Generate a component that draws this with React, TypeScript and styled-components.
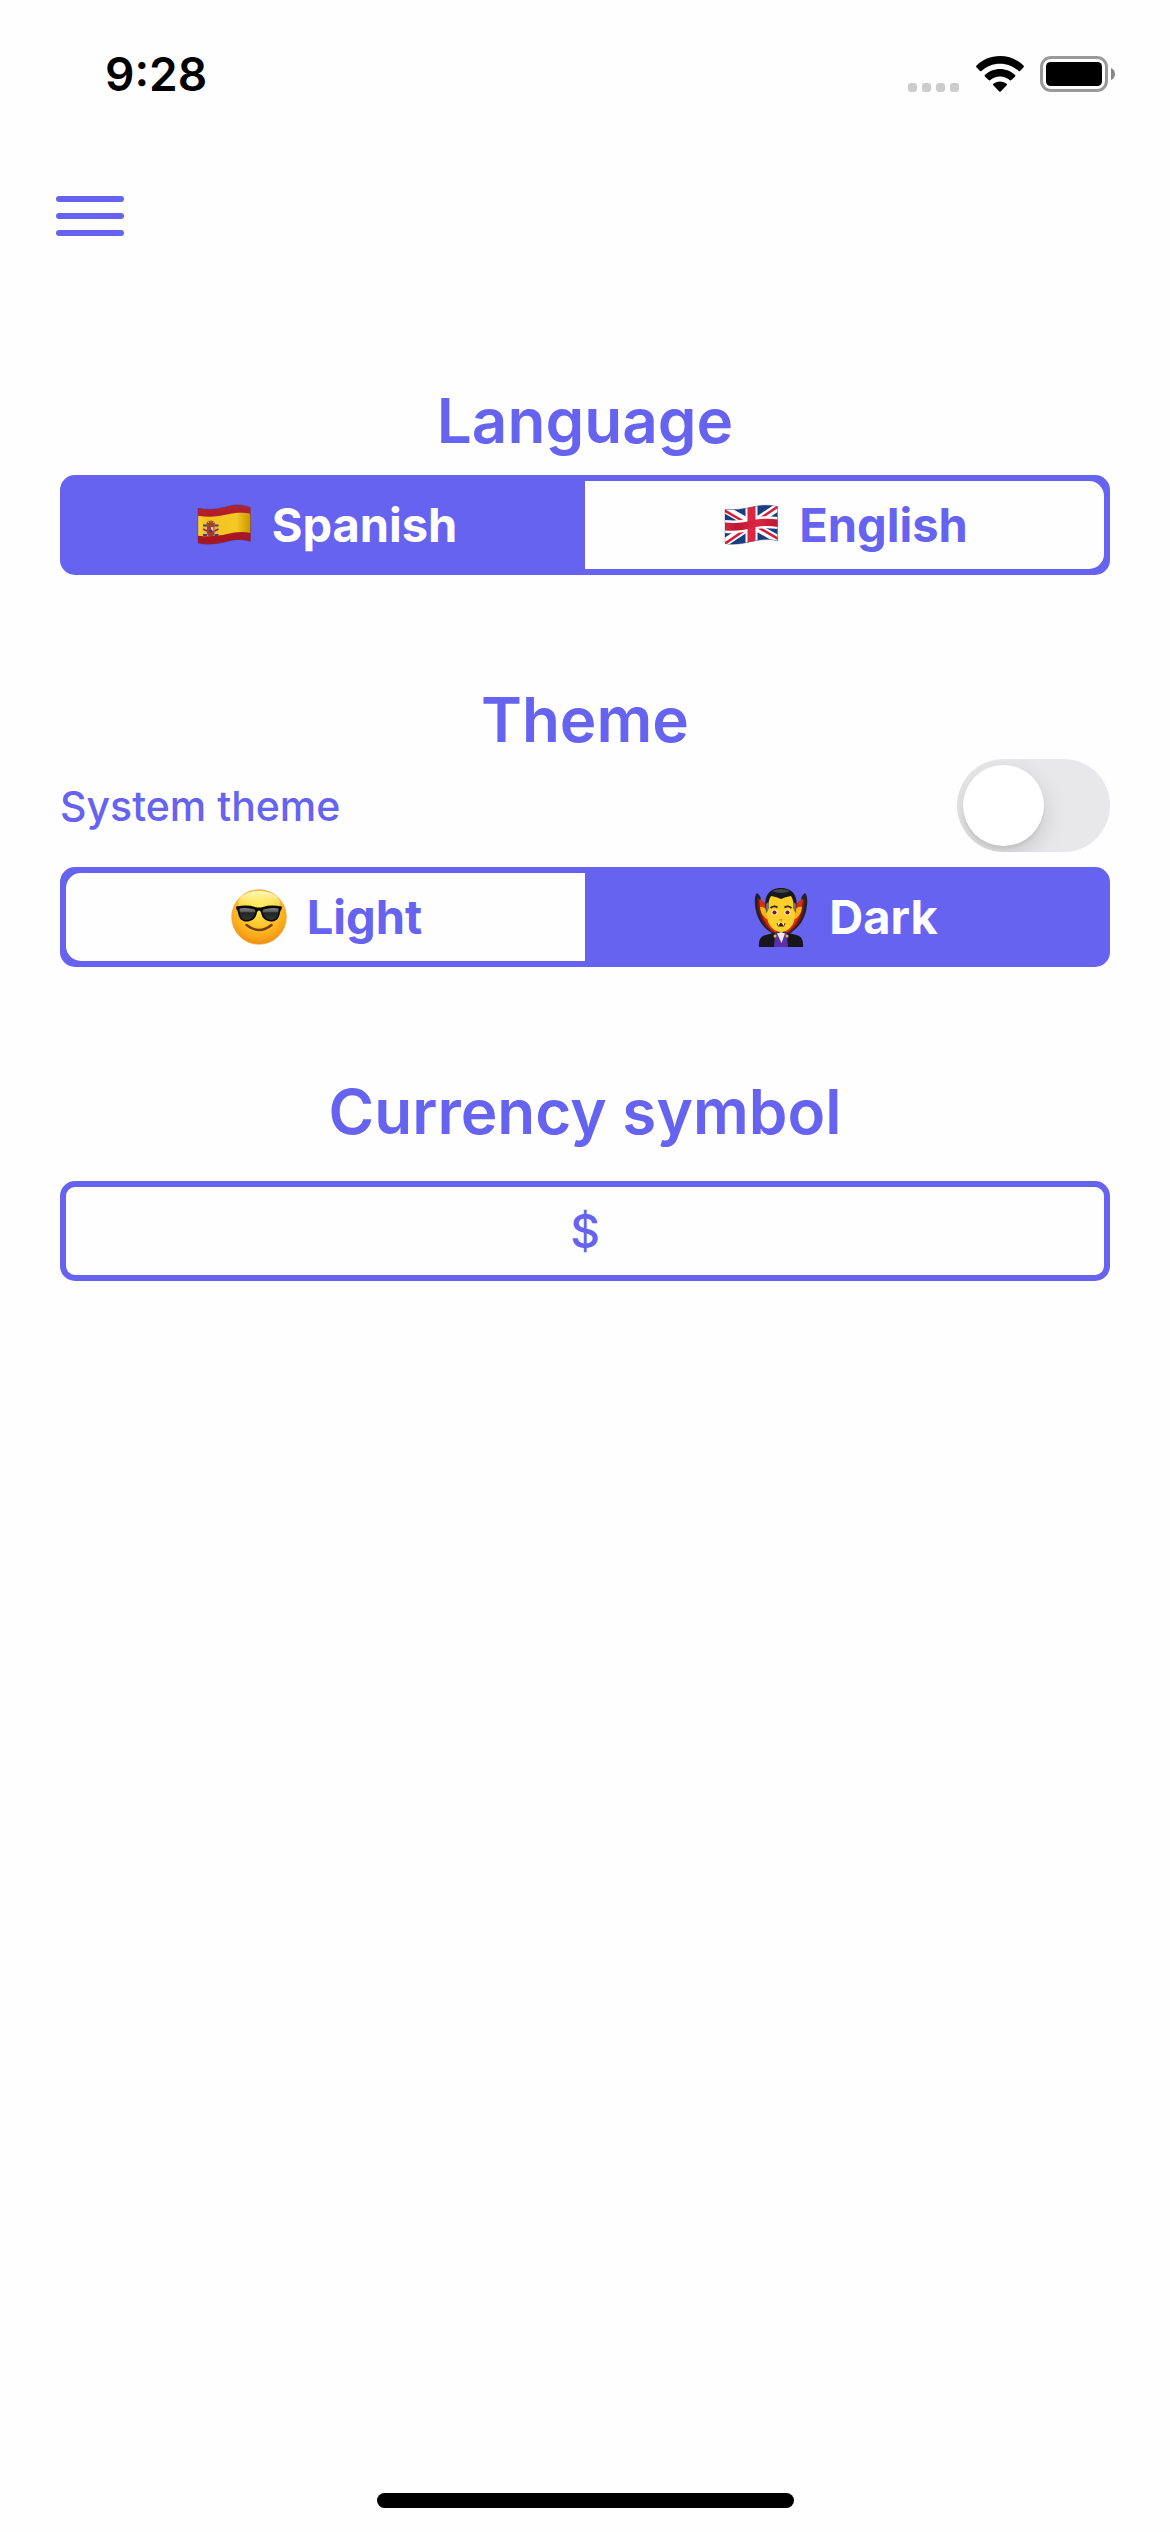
import React, { useState } from "react";
import styled, { createGlobalStyle } from "styled-components";

const ACCENT = "#6663f1";
const SURFACE = "#fefefe";

const GlobalStyle = createGlobalStyle`
  *, *::before, *::after { box-sizing: border-box; }
  body {
    margin: 0;
    background: ${SURFACE};
    font-family: Inter, "Liberation Sans", sans-serif;
  }
  button, input { font: inherit; color: inherit; margin: 0; }
`;

const Screen = styled.div`
  display: flex;
  flex-direction: column;
  min-height: 100vh;
  background: ${SURFACE};
  color: ${ACCENT};
`;

const StatusBar = styled.div`
  display: flex;
  justify-content: space-between;
  align-items: center;
  height: 141px;
  padding: 6px 55px 0 105px;
  color: #000;
`;

const Time = styled.time`
  font-size: 46px;
  line-height: 56px;
  font-weight: 600;
`;

const StatusIcons = styled.div`
  display: flex;
  align-items: center;
  gap: 16px;
`;

const Header = styled.header`
  display: flex;
  align-items: center;
  height: 150px;
  padding: 0 44px;
`;

const MenuButton = styled.button`
  display: grid;
  gap: 11px;
  padding: 12px;
  border: 0;
  background: none;
  cursor: pointer;
`;

const MenuLine = styled.span`
  width: 68px;
  height: 6px;
  border-radius: 3px;
  background: ${ACCENT};
`;

const Settings = styled.main`
  display: flex;
  flex-direction: column;
  gap: 106px;
  padding: 91px 60px 0;
`;

const Section = styled.section`
  display: flex;
  flex-direction: column;
`;

const Title = styled.h2<{ $space: number }>`
  margin: 0 0 ${(p) => p.$space}px;
  font-size: 62px;
  line-height: 78px;
  font-weight: 600;
  text-align: center;
`;

const Segments = styled.div`
  display: flex;
  height: 100px;
  padding: 6px;
  border-radius: 15px;
  background: ${ACCENT};
`;

const Segment = styled.button<{ $active: boolean }>`
  display: flex;
  flex: 1;
  align-items: center;
  justify-content: center;
  gap: 18px;
  padding: 0;
  border: 0;
  background: ${(p) => (p.$active ? ACCENT : SURFACE)};
  color: ${(p) => (p.$active ? "#fff" : ACCENT)};
  font-size: 47px;
  line-height: 60px;
  font-weight: 700;
  cursor: pointer;

  &:first-child { border-radius: 15px 0 0 15px; }
  &:last-child { border-radius: 0 15px 15px 0; }
`;

const SwitchRow = styled.label`
  display: flex;
  align-items: center;
  justify-content: space-between;
  margin-bottom: 15px;
  font-size: 41px;
  line-height: 50px;
  font-weight: 500;
  cursor: pointer;
`;

const Switch = styled.input`
  appearance: none;
  display: flex;
  align-items: center;
  width: 153px;
  height: 93px;
  padding: 6px;
  border-radius: 47px;
  background: #e8e8ea;
  overflow: hidden;
  cursor: pointer;

  &::before {
    content: "";
    width: 81px;
    height: 81px;
    border-radius: 50%;
    background: #fff;
    box-shadow: 0 9px 24px rgba(0, 0, 0, 0.15), 0 3px 3px rgba(0, 0, 0, 0.06);
  }
  &:checked { justify-content: flex-end; background: ${ACCENT}; }
`;

const SymbolInput = styled.input`
  width: 100%;
  height: 100px;
  padding: 0 20px;
  border: 6px solid ${ACCENT};
  border-radius: 15px;
  background: ${SURFACE};
  font-size: 46px;
  line-height: 56px;
  font-weight: 500;
  text-align: center;
`;

const HomeArea = styled.div`
  display: flex;
  justify-content: center;
  margin-top: auto;
  padding: 24px;
`;

const HomeIndicator = styled.div`
  width: 417px;
  height: 15px;
  border-radius: 8px;
  background: #000;
`;

const Signal = () => (
  <svg width="52" height="36" viewBox="0 0 52 36" fill="#ccc" aria-hidden="true">
    {[0, 14, 28, 42].map((x) => (
      <rect key={x} x={x} y="27" width="9" height="9" rx="3" />
    ))}
  </svg>
);

const Wifi = () => (
  <svg width="48" height="36" viewBox="0 0 48 36" aria-hidden="true">
    <path d="M24 0C33.300 0 41.800 3.700 47.600 9.700Q48.300 10.500 47.600 11.200L44 15Q43.300 15.600 42.600 15C37.700 10.400 31.200 7.700 24 7.700S10.300 10.400 5.400 15Q4.700 15.600 4 15L.4 11.200Q-.3 10.500.4 9.700C6.200 3.700 14.700 0 24 0Z" />
    <path d="M24 13C29.900 13 35.200 15.300 39.100 19Q39.800 19.700 39.100 20.400L35.400 24.100Q34.700 24.800 34 24.200C31.300 21.900 27.800 20.500 24 20.500S16.700 21.900 14 24.200Q13.300 24.800 12.600 24.100L8.900 20.400Q8.200 19.700 8.900 19C12.800 15.300 18.100 13 24 13Z" />
    <path d="M24 25.400C26.500 25.400 28.900 26.300 30.700 27.800Q31.400 28.500 30.700 29.200L24.700 35.400Q24 36 23.300 35.400L17.300 29.200Q16.600 28.500 17.300 27.800C19.100 26.300 21.500 25.400 24 25.400Z" />
  </svg>
);

const Battery = () => (
  <svg width="75" height="36" viewBox="0 0 75 36" aria-hidden="true">
    <rect x="1.500" y="1.500" width="65" height="33" rx="9.500" fill="none" stroke="#999" strokeWidth="3" />
    <rect x="6" y="6" width="56" height="24" rx="4.500" />
    <path d="M71 12C73.500 12.800 75 15.200 75 18S73.500 23.200 71 24Z" fill="#888" />
  </svg>
);

const FLAG_SPAIN = "M4 13C14 15.500 24 14 33 11.500S49 9.500 56.500 12.500V46.500C49 44 42 44 33 46.500S13 50.500 4 48Z";
const FLAG_UK = "M4 14C12 15.500 22 14 31 12S48 9.500 56.500 11.500V46C48 43.500 40 44.500 31 46.500S12 50.500 4 48.500Z";

const SpainFlag = () => (
  <svg width="60" height="60" viewBox="0 0 60 60" aria-hidden="true">
    <defs>
      <clipPath id="spain"><path d={FLAG_SPAIN} /></clipPath>
      <linearGradient id="gold">
        <stop offset="0" stopColor="#ffd83a" />
        <stop offset=".2" stopColor="#f1c321" />
        <stop offset=".7" stopColor="#f5c925" />
        <stop offset=".93" stopColor="#c99a00" />
        <stop offset="1" stopColor="#dcae12" />
      </linearGradient>
      <linearGradient id="crimson" x2="0" y2="1">
        <stop offset="0" stopColor="#8f3642" />
        <stop offset=".25" stopColor="#b3202b" />
        <stop offset=".75" stopColor="#a91520" />
        <stop offset="1" stopColor="#7b3040" />
      </linearGradient>
    </defs>
    <g clipPath="url(#spain)">
      <rect width="60" height="60" fill="url(#crimson)" />
      <path d="M0 20C14 23 24 21.500 33 19.500S49 17 60 19.500V38.500C49 36 42 37 33 39S13 42.500 0 40Z" fill="url(#gold)" />
      <path d="M9.500 32h3v8h-3zM21 32h3v8h-3z" fill="#d7b77e" />
      <path d="M9 29.500h4v2H9zM20.500 29.500h4v2h-4zM9 39h4v2H9zM20.500 39h4v2h-4z" fill="#4f3d6b" />
      <path d="M9 34l4 2M20.500 36l4-2" stroke="#b3202b" strokeWidth="1.500" />
      <path d="M12.500 28.500Q13 26 16.800 25.500Q20.500 26 21 28.500L20 31.500H13.500Z" fill="#98452c" />
      <path d="M13 31H20.500V38Q20.300 41.500 16.800 41.500Q13.200 41.500 13 38Z" fill="#a63a35" />
      <path d="M17 32h2.500v4H17z" fill="#d9c3b5" />
      <circle cx="16.800" cy="36" r="1.600" fill="#31427c" />
      <path d="M14 27.500h1M16.400 26.800h1M19 27.500h1" stroke="#e8b82e" strokeWidth="1" />
    </g>
    <path d={FLAG_SPAIN} fill="none" stroke="#503050" strokeOpacity=".35" />
  </svg>
);

const UkFlag = () => (
  <svg width="60" height="60" viewBox="0 0 60 60" aria-hidden="true">
    <defs>
      <clipPath id="uk"><path d={FLAG_UK} /></clipPath>
      <linearGradient id="ukred">
        <stop offset="0" stopColor="#e02b42" />
        <stop offset=".25" stopColor="#bd1735" />
        <stop offset=".6" stopColor="#dc2743" />
        <stop offset=".93" stopColor="#bb1735" />
        <stop offset="1" stopColor="#d82540" />
      </linearGradient>
    </defs>
    <g clipPath="url(#uk)">
      <rect width="60" height="60" fill="#183d83" />
      <path d="M0 12L60 46M0 50L60 10" stroke="#fff" strokeWidth="8" />
      <path d="M2 14.500L26 28.500M34 30.500L60 45.500M2 50L26 33.500M34 27L60 9.500" stroke="#d31f39" strokeWidth="2.600" />
      <path d="M24.500 8h12v46h-12z" fill="#fff" />
      <path d="M0 24.500C13 26.500 23 25 31 23S48 20.500 60 22.500V34.500C48 32.500 39 33 31 35S13 39.500 0 37.500Z" fill="#fff" />
      <path d="M26.500 8h8v46h-8z" fill="#dc2743" />
      <path d="M0 27C13 29 23 27.500 31 25.500S48 23 60 25V32.500C48 30 39 31 31 33S13 37 0 35Z" fill="url(#ukred)" />
    </g>
    <path d={FLAG_UK} fill="none" stroke="#20304a" strokeOpacity=".3" />
  </svg>
);

const CoolFace = () => (
  <svg width="60" height="60" viewBox="0 0 60 60" aria-hidden="true">
    <defs>
      <radialGradient id="face" cx=".5" cy=".35" r=".66">
        <stop offset="0" stopColor="#ffed4e" />
        <stop offset=".45" stopColor="#ffc930" />
        <stop offset=".8" stopColor="#fba51a" />
        <stop offset="1" stopColor="#e98c12" />
      </radialGradient>
      <linearGradient id="shine" x2="0" y2="1">
        <stop offset="0" stopColor="#fffbc5" />
        <stop offset="1" stopColor="#fff14a" stopOpacity="0" />
      </linearGradient>
      <linearGradient id="lens" x2="0" y2="1">
        <stop offset="0" stopColor="#86888a" />
        <stop offset=".32" stopColor="#55575a" />
        <stop offset=".4" stopColor="#222325" />
        <stop offset="1" stopColor="#333436" />
      </linearGradient>
    </defs>
    <circle cx="30" cy="30" r="27.300" fill="url(#face)" stroke="#efa12a" strokeWidth=".7" />
    <ellipse cx="30" cy="16" rx="21" ry="12" fill="url(#shine)" />
    <path d="M17.500 38Q30 48 42.500 38" fill="none" stroke="#74400b" strokeWidth="2.500" strokeLinecap="round" />
    <path d="M7 19.500Q19 17.500 26 20Q30 21 34 20Q41 17.500 53 19.500L52.500 22.500Q51.500 23 51 25.500C50 32 47 34.500 42.500 34.500C36.500 34.500 33 31 32 25.500Q31.500 23.500 30 23.500T28 25.500C27 31 23.500 34.500 17.500 34.500C13 34.500 10 32 9 25.500Q8.500 23 7.500 22.500Z" fill="#070707" />
    <path d="M10.500 21.500Q18 20 25.500 22.500Q27 24 26 26.500Q24 33 17.500 33C12 33 10.500 28 10.500 21.500ZM49.500 21.500Q42 20 34.500 22.500Q33 24 34 26.500Q36 33 42.500 33C48 33 49.500 28 49.500 21.500Z" fill="url(#lens)" />
  </svg>
);

const Vampire = () => (
  <svg width="60" height="60" viewBox="0 0 60 60" aria-hidden="true">
    <path d="M6 6Q3 9 4 18C5 31 12 42 24 48H36C48 42 55 31 56 18Q57 9 54 6Q50 9 50 13L45 24L30 45L15 24L10 13Q10 9 6 6Z" fill="#252028" />
    <path d="M9.500 12L16 18L27 46H24Q9 38 8 13ZM50.500 12L44 18L33 46H36Q51 38 52 13Z" fill="#d4300f" />
    <path d="M8 13Q9 34 24 46L24.500 47.500Q6 37 6.500 11ZM52 13Q51 34 36 46L35.500 47.500Q54 37 53.500 11Z" fill="#7c1a12" />
    <path d="M8 60Q7 51 13 48.500L24 45.500H36L47 48.500Q53 51 52 60Z" fill="#17161b" />
    <path d="M24 46H36L37 60H23Z" fill="#5a2fa7" />
    <path d="M26 46.500L30 45L34 46.500L30.500 56Z" fill="#eee9f4" />
    <path d="M9 20Q14 19 18 25V33Q10 30 9 20ZM51 20Q46 19 42 25V33Q50 30 51 20Z" fill="#f8b51b" />
    <path d="M16 18Q16 6 30 6T44 18V28C44 38 37 45 30 45S16 38 16 28Z" fill="#ffcf2a" />
    <path d="M15.500 26C11 7 20 1 30 1S49 7 44.500 26L42.500 21Q43 14 40 9Q34 10 30 12Q26 10 20 9Q17 14 17.500 21Z" fill="#18191a" />
    <path d="M15 17L17.500 15V22L15.500 26ZM45 17L42.500 15V22L44.500 26Z" fill="#777" />
    <path d="M21 4Q30 0 39 4Q30 8 21 4Z" fill="#55595b" opacity=".7" />
    <path d="M19.500 21Q23 18 26.500 20.500M33.500 20.500Q37 18 40.500 21" fill="none" stroke="#30251a" strokeWidth="1.800" />
    <ellipse cx="23.500" cy="25.500" rx="3.200" ry="2.800" fill="#fff8df" />
    <ellipse cx="36.500" cy="25.500" rx="3.200" ry="2.800" fill="#fff8df" />
    <circle cx="23.500" cy="25.500" r="2.100" fill="#791b17" />
    <circle cx="36.500" cy="25.500" r="2.100" fill="#791b17" />
    <path d="M28.500 32.500Q30 33.500 31.500 32.500" fill="none" stroke="#d98c19" strokeWidth="1.500" />
    <path d="M25.500 36H34.500L33 39.500H27Z" fill="#451517" />
    <path d="M26.500 36h2.500l-1.500 3ZM31 36h2.500l-1 3Z" fill="#fff" />
    <circle cx="24" cy="49" r="1.500" fill="#eeb83c" />
    <circle cx="36" cy="49" r="1.500" fill="#eeb83c" />
  </svg>
);

export default function App() {
  const [language, setLanguage] = useState("es");
  const [theme, setTheme] = useState("dark");
  const [system, setSystem] = useState(false);
  const [symbol, setSymbol] = useState("$");

  return (
    <Screen>
      <GlobalStyle />
      <StatusBar>
        <Time>9:28</Time>
        <StatusIcons>
          <Signal />
          <Wifi />
          <Battery />
        </StatusIcons>
      </StatusBar>
      <Header>
        <MenuButton type="button" aria-label="Menu">
          <MenuLine />
          <MenuLine />
          <MenuLine />
        </MenuButton>
      </Header>
      <Settings>
        <Section>
          <Title $space={15}>Language</Title>
          <Segments role="group" aria-label="Language">
            <Segment type="button" $active={language === "es"} aria-pressed={language === "es"} onClick={() => setLanguage("es")}>
              <SpainFlag />
              Spanish
            </Segment>
            <Segment type="button" $active={language === "en"} aria-pressed={language === "en"} onClick={() => setLanguage("en")}>
              <UkFlag />
              English
            </Segment>
          </Segments>
        </Section>
        <Section>
          <Title $space={0}>Theme</Title>
          <SwitchRow>
            System theme
            <Switch type="checkbox" role="switch" checked={system} onChange={(e) => setSystem(e.target.checked)} />
          </SwitchRow>
          <Segments role="group" aria-label="Theme">
            <Segment type="button" $active={theme === "light"} aria-pressed={theme === "light"} onClick={() => setTheme("light")}>
              <CoolFace />
              Light
            </Segment>
            <Segment type="button" $active={theme === "dark"} aria-pressed={theme === "dark"} onClick={() => setTheme("dark")}>
              <Vampire />
              Dark
            </Segment>
          </Segments>
        </Section>
        <Section>
          <Title $space={30} id="currency-title">Currency symbol</Title>
          <SymbolInput type="text" aria-labelledby="currency-title" value={symbol} onChange={(e) => setSymbol(e.target.value)} />
        </Section>
      </Settings>
      <HomeArea>
        <HomeIndicator />
      </HomeArea>
    </Screen>
  );
}
